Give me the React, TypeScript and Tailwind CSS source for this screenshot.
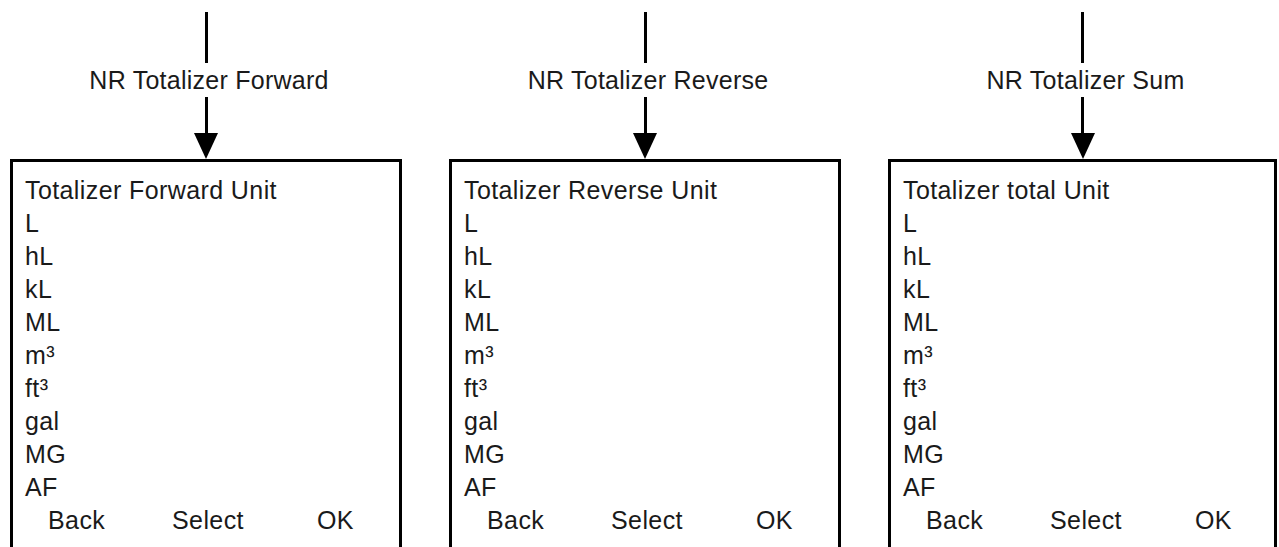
const units = ["L", "hL", "kL", "ML", "m³", "ft³", "gal", "MG", "AF"];

const columns = [
  { label: "NR Totalizer Forward", title: "Totalizer Forward Unit" },
  { label: "NR Totalizer Reverse", title: "Totalizer Reverse Unit" },
  { label: "NR Totalizer Sum", title: "Totalizer total Unit" },
];

function Column({ label, title }: { label: string; title: string }) {
  return (
    <div className="flex h-full flex-col items-center">
      <div className="mt-[12px] h-[51px] w-[3px] bg-black" />
      <div className="ml-[6px] h-[34px] whitespace-nowrap text-[25px] leading-[34px] tracking-[0.25px]">
        {label}
      </div>
      <div className="h-[36px] w-[3px] bg-black" />
      <svg width="24" height="26" viewBox="0 0 24 26" className="block">
        <polygon points="0,0 24,0 12,26" fill="#000" />
      </svg>
      <div className="w-full flex-1 border-[3px] border-b-0 border-black pl-[12px] pt-[12px] tracking-[0.4px]">
        <div className="h-[33px] leading-[33px]">{title}</div>
        {units.map((u) => (
          <div key={u} className="h-[33px] leading-[33px]">
            {u}
          </div>
        ))}
        <div className="flex h-[33px] leading-[33px]">
          <span className="ml-[23px] w-[124px]">Back</span>
          <span className="w-[145px]">Select</span>
          <span>OK</span>
        </div>
      </div>
    </div>
  );
}

export default function App() {
  return (
    <div
      className="grid h-[547px] w-[1279px] grid-cols-[392px_392px_389px] gap-x-[47px] overflow-hidden bg-white pl-[10px] text-[25px] text-[#1a1a1a]"
      style={{ fontFamily: '"Liberation Sans", Arial, sans-serif' }}
    >
      {columns.map((c) => (
        <Column key={c.label} label={c.label} title={c.title} />
      ))}
    </div>
  );
}
